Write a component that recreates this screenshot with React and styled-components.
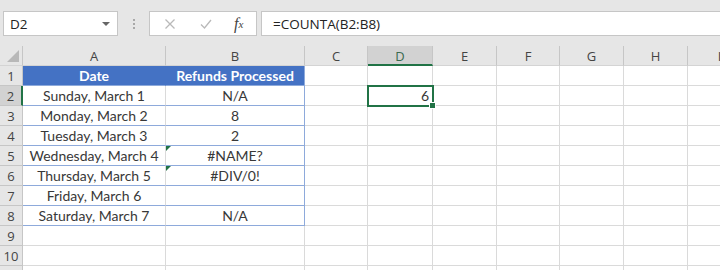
import React from 'react';
import styled, { createGlobalStyle } from 'styled-components';

const GlobalStyle = createGlobalStyle`
  html, body { margin: 0; padding: 0; background: #ffffff; overflow: hidden; }
  #root { width: 720px; height: 270px; overflow: hidden; }
`;

const COLS = ['A', 'B', 'C', 'D', 'E', 'F', 'G', 'H', 'I'];
const WIDTHS = '23px 143px 139px 63px 65px 64px 63px 64px 64px 64px';

const rows = [
  ['Date', 'Refunds Processed'],
  ['Sunday, March 1', 'N/A'],
  ['Monday, March 2', '8'],
  ['Tuesday, March 3', '2'],
  ['Wednesday, March 4', '#NAME?', true],
  ['Thursday, March 5', '#DIV/0!', true],
  ['Friday, March 6', ''],
  ['Saturday, March 7', 'N/A'],
  ['', ''],
  ['', ''],
  ['', ''],
];

const Page = styled.div`
  width: 720px;
  height: 270px;
  background: #e6e6e6;
  display: flex;
  flex-direction: column;
`;

const Toolbar = styled.div`
  display: flex;
  align-items: center;
  height: 25px;
  padding: 11px 0 10px 3px;
  border-top: 1px solid #d8d8d8;
  margin-top: -1px;
`;

const NameBox = styled.div`
  box-sizing: border-box;
  width: 115px;
  height: 25px;
  background: #fff;
  border: 1px solid #c6c6c6;
  display: flex;
  align-items: center;
  justify-content: space-between;
  padding: 0 7px 0 6px;
  font-family: 'Open Sans', sans-serif;
  font-size: 13.5px;
  color: #222;
`;

const Caret = styled.span`
  width: 0;
  height: 0;
  border-left: 4px solid transparent;
  border-right: 4px solid transparent;
  border-top: 4px solid #666;
`;

const Grip = styled.div`
  width: 31px;
  display: flex;
  flex-direction: column;
  align-items: center;
  gap: 2px;
  span {
    width: 2px;
    height: 2px;
    background: #a8a8a8;
  }
`;

const FxBox = styled.div`
  box-sizing: border-box;
  width: 108px;
  height: 25px;
  background: #fff;
  border: 1px solid #c6c6c6;
  display: flex;
  align-items: center;
  padding-left: 14px;
  gap: 24px;
`;

const FxLabel = styled.span`
  font-family: 'Liberation Serif', serif;
  font-style: italic;
  font-size: 16px;
  color: #444;
  margin-left: -2px;
  sub {
    font-size: 11px;
    vertical-align: 1px;
  }
`;

const Formula = styled.div`
  box-sizing: border-box;
  flex: 1;
  height: 25px;
  margin-left: 4px;
  background: #fff;
  border: 1px solid #c6c6c6;
  border-right: none;
  display: flex;
  align-items: center;
  padding-left: 11px;
  font-family: 'Open Sans', sans-serif;
  font-size: 13.5px;
  color: #222;
`;

const Sheet = styled.div`
  display: grid;
  grid-template-columns: ${WIDTHS};
  grid-auto-rows: 20px;
  background: #fff;
  flex: 1;
  overflow: hidden;
`;

const ColHead = styled.div`
  box-sizing: border-box;
  background: ${p => (p.$sel ? '#d2d2d2' : '#e6e6e6')};
  border-right: 1px solid #c6c6c6;
  border-bottom: ${p => (p.$sel ? '2px solid #217346' : '1px solid #d4d4d4')};
  display: flex;
  align-items: center;
  justify-content: center;
  font-family: 'Open Sans', sans-serif;
  font-size: 13px;
  color: ${p => (p.$sel ? '#3a6a4f' : '#444')};
  padding-top: ${p => (p.$sel ? '1px' : '0')};
`;

const Corner = styled.div`
  box-sizing: border-box;
  background: #e6e6e6;
  border-right: 1px solid #c6c6c6;
  border-bottom: 1px solid #d4d4d4;
  position: relative;
  &::after {
    content: '';
    position: absolute;
    right: 3px;
    bottom: 3px;
    border-left: 12px solid transparent;
    border-bottom: 12px solid #b8b8b8;
  }
`;

const RowHead = styled.div`
  box-sizing: border-box;
  background: ${p => (p.$sel ? '#d2d2d2' : '#e6e6e6')};
  border-right: ${p => (p.$sel ? '2px solid #217346' : '1px solid #c6c6c6')};
  border-bottom: 1px solid #c6c6c6;
  display: flex;
  align-items: center;
  justify-content: center;
  font-family: 'Open Sans', sans-serif;
  font-size: 13px;
  color: #444;
`;

const Cell = styled.div`
  box-sizing: border-box;
  position: relative;
  border-right: 1px solid ${p => p.$rc || '#dadada'};
  border-bottom: 1px solid ${p => p.$bc || '#dadada'};
  background: ${p => (p.$head ? '#4472c4' : '#fff')};
  color: ${p => (p.$head ? '#fff' : '#383838')};
  font-weight: ${p => (p.$head ? 700 : 400)};
  font-family: Lato, 'Liberation Sans', sans-serif;
  font-size: 14px;
  display: flex;
  align-items: center;
  justify-content: ${p => p.$align || 'center'};
  padding: 0 3px;
  white-space: nowrap;
  outline: ${p => (p.$active ? '2px solid #217346' : 'none')};
  outline-offset: -1px;
  z-index: ${p => (p.$active ? 2 : 0)};
`;

const ErrorFlag = styled.span`
  position: absolute;
  left: 0;
  top: 0;
  border-top: 5px solid #217346;
  border-right: 5px solid transparent;
`;

const Handle = styled.span`
  position: absolute;
  right: -4px;
  bottom: -4px;
  width: 5px;
  height: 5px;
  background: #217346;
  border: 1px solid #fff;
`;

function Icon({ children }) {
  return (
    <svg width="12" height="12" viewBox="0 0 12 12" fill="none" stroke="#b9b9b9" strokeWidth="1.3">
      {children}
    </svg>
  );
}

export default function App() {
  return (
    <Page>
      <GlobalStyle />
      <Toolbar>
        <NameBox>
          D2
          <Caret />
        </NameBox>
        <Grip>
          <span />
          <span />
          <span />
        </Grip>
        <FxBox>
          <Icon>
            <path d="M1.5 1.5 L10.5 10.5 M10.5 1.5 L1.5 10.5" />
          </Icon>
          <Icon>
            <path d="M1 6.5 L4.5 10 L11 2" />
          </Icon>
          <FxLabel>
            f<sub>x</sub>
          </FxLabel>
        </FxBox>
        <Formula>=COUNTA(B2:B8)</Formula>
      </Toolbar>
      <Sheet>
        <Corner />
        {COLS.map(c => (
          <ColHead key={c} $sel={c === 'D'}>
            {c}
          </ColHead>
        ))}
        {rows.map((r, i) => {
          const n = i + 1;
          const inTable = n <= 8;
          const head = n === 1;
          const bc = inTable ? '#8eaadb' : undefined;
          return (
            <React.Fragment key={n}>
              <RowHead $sel={n === 2}>{n <= 10 ? n : ''}</RowHead>
              <Cell $head={head} $bc={bc} $rc={head ? '#4472c4' : undefined}>
                {r[0]}
              </Cell>
              <Cell $head={head} $bc={bc} $rc={inTable ? '#8eaadb' : undefined}>
                {r[2] && <ErrorFlag />}
                {r[1]}
              </Cell>
              <Cell />
              <Cell $align="flex-end" $active={n === 2}>
                {n === 2 && '6'}
                {n === 2 && <Handle />}
              </Cell>
              <Cell />
              <Cell />
              <Cell />
              <Cell />
              <Cell />
            </React.Fragment>
          );
        })}
      </Sheet>
    </Page>
  );
}
